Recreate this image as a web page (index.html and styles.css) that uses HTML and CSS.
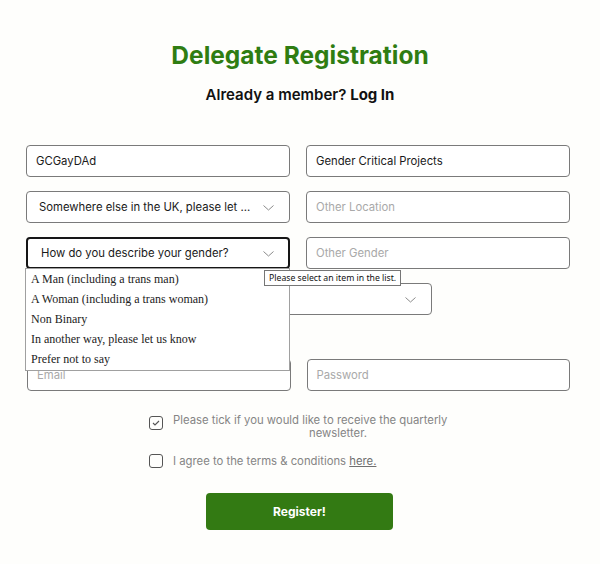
FILE: index.html
```html
<!DOCTYPE html>
<html>
<head>
<meta charset="utf-8">
<link rel="stylesheet" href="styles.css">
</head>
<body>
<div class="page">
  <h1 class="title">Delegate Registration</h1>
  <p class="sub">Already a member? <b>Log In</b></p>

  <div class="form">
    <div class="row r1">
      <div class="field"><span class="val">GCGayDAd</span></div>
      <div class="field"><span class="val">Gender Critical Projects</span></div>
    </div>
    <div class="row r2">
      <div class="field select"><span class="val sel">Somewhere else in the UK, please let ...</span><svg class="chev" width="11" height="6" viewBox="0 0 11 6"><path d="M0.5 0.5 L5.5 5 L10.5 0.5" fill="none" stroke="#8a8a8a" stroke-width="1"/></svg></div>
      <div class="field"><span class="ph">Other Location</span></div>
    </div>
    <div class="row r3">
      <div class="field select focus"><span class="val sel">How do you describe your gender?</span><svg class="chev" width="11" height="6" viewBox="0 0 11 6"><path d="M0.5 0.5 L5.5 5 L10.5 0.5" fill="none" stroke="#8a8a8a" stroke-width="1"/></svg></div>
      <div class="field"><span class="ph">Other Gender</span></div>
    </div>
    <div class="row r4">
      <div class="field select wide"><svg class="chev" width="11" height="6" viewBox="0 0 11 6"><path d="M0.5 0.5 L5.5 5 L10.5 0.5" fill="none" stroke="#8a8a8a" stroke-width="1"/></svg></div>
    </div>
    <div class="row r5">
      <div class="field"><span class="ph">Email</span></div>
      <div class="field"><span class="ph">Password</span></div>
    </div>

    <ul class="dropdown">
      <li>A Man (including a trans man)</li>
      <li>A Woman (including a trans woman)</li>
      <li>Non Binary</li>
      <li>In another way, please let us know</li>
      <li>Prefer not to say</li>
    </ul>
    <div class="tip">Please select an item in the list.</div>
  </div>

  <div class="checks">
    <div class="check">
      <span class="box on"><svg width="8" height="6" viewBox="0 0 8 6"><path d="M1 3 L3 5 L7 1" fill="none" stroke="#555" stroke-width="1.1"/></svg></span>
      <span class="ctext wrap"><span class="l1">Please tick if you would like to receive the quarterly</span><span class="l2">newsletter.</span></span>
    </div>
    <div class="check c2">
      <span class="box"></span>
      <span class="ctext">I agree to the terms &amp; conditions <u>here.</u></span>
    </div>
  </div>

  <div class="btnwrap"><button class="btn">Register!</button></div>
</div>
</body>
</html>
```
FILE: styles.css
```css
html, body {
  margin: 0;
  padding: 0;
  background: #fefefc;
}
body {
  font-family: Inter, "Noto Sans", sans-serif;
  color: #111;
  width: 600px;
  height: 564px;
  overflow: hidden;
}
.page {
  padding-top: 38px;
}
.title {
  margin: 0;
  text-align: center;
  color: #2f7d12;
  font-size: 24.5px;
  font-weight: 700;
  line-height: 34px;
}
.sub {
  margin: 13px 0 0;
  text-align: center;
  font-size: 15px;
  font-weight: 600;
  line-height: 20px;
}
.sub b {
  font-weight: 700;
}
.form {
  position: relative;
  margin: 40px 0 0 26px;
  width: 544px;
}
.row {
  display: flex;
  gap: 16px;
}
.r2 { margin-top: 14px; }
.r3 { margin-top: 14px; }
.r4 { margin-top: 14px; }
.r5 { margin-top: 44px; padding-left: 1px; }
.field {
  box-sizing: border-box;
  width: 264px;
  height: 32px;
  border: 1px solid #7a7a7a;
  border-radius: 4px;
  background: #fff;
  display: flex;
  align-items: center;
  padding: 0 9px;
  font-size: 11.3px;
  position: relative;
}
.field.wide {
  width: 406px;
}
.field.focus {
  border: 2px solid #161616;
  padding-left: 10px;
}
.val { color: #1a1a1a; }
.val.sel { padding-left: 3px; }
.ph { color: #a9a9a9; }
.chev {
  position: absolute;
  right: 15px;
  top: 13px;
}
.focus .chev { right: 14px; top: 12px; }
.dropdown {
  position: absolute;
  left: -1px;
  top: 123px;
  width: 265px;
  height: 103px;
  box-sizing: border-box;
  margin: 0;
  padding: 0;
  list-style: none;
  background: #fff;
  border: 1px solid #a0a0a0;
  font-family: "Liberation Serif", serif;
  font-size: 12px;
  color: #222;
}
.dropdown li {
  height: 20px;
  line-height: 20px;
  padding-left: 5px;
}
.tip {
  position: absolute;
  left: 238px;
  top: 125px;
  height: 16px;
  box-sizing: border-box;
  padding: 0 4px;
  border: 1px solid #767676;
  background: #fff;
  font-family: "Noto Sans", sans-serif;
  font-size: 8.7px;
  line-height: 14px;
  color: #111;
  white-space: nowrap;
}
.checks {
  margin: 23px 0 0 149px;
}
.check {
  display: flex;
  align-items: flex-start;
  gap: 10px;
}
.check.c2 {
  margin-top: 12px;
}
.box {
  box-sizing: border-box;
  width: 14px;
  height: 14px;
  border: 1px solid #555;
  border-radius: 3px;
  margin-top: 2px;
  display: flex;
  align-items: center;
  justify-content: center;
  flex: none;
}
.ctext {
  font-size: 11.3px;
  color: #858585;
  line-height: 13px;
}
.ctext.wrap {
  width: 330px;
}
.l1 { display: block; }
.l2 { display: block; text-align: center; }
.c2 .ctext { line-height: 18px; }
.ctext u { color: #707070; }
.btnwrap {
  margin-top: 23px;
  padding-left: 206px;
}
.btn {
  width: 187px;
  height: 37px;
  border: none;
  border-radius: 4px;
  background: #337a13;
  color: #fff;
  font-family: Inter, "Noto Sans", sans-serif;
  font-size: 12px;
  font-weight: 700;
}
```
